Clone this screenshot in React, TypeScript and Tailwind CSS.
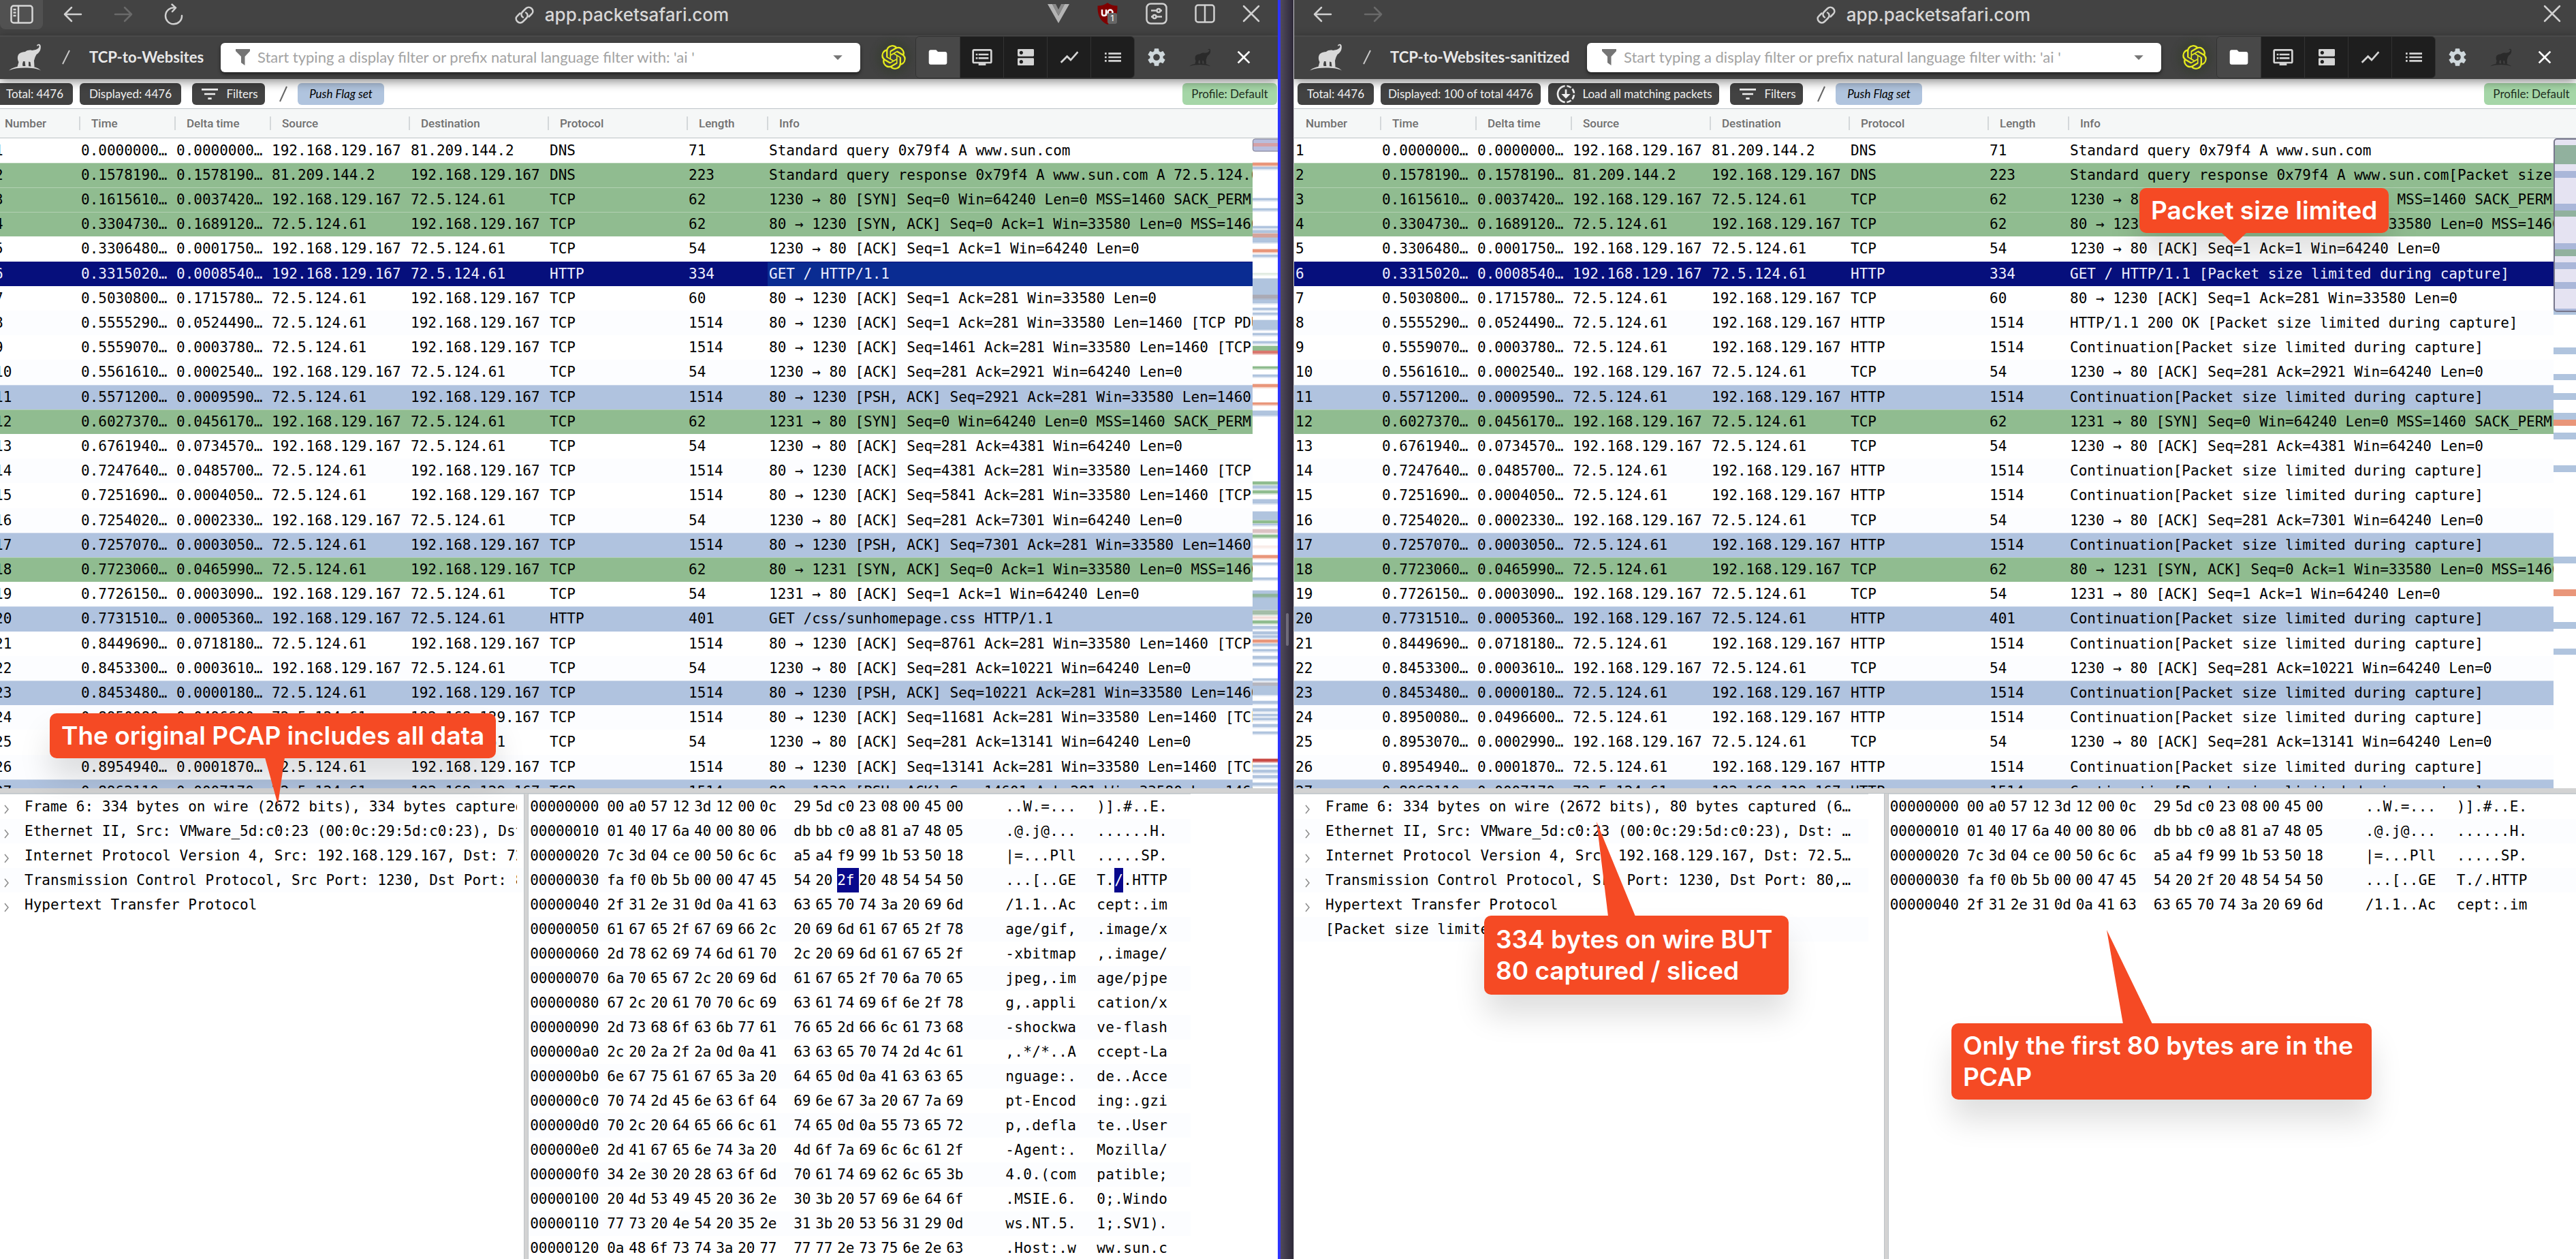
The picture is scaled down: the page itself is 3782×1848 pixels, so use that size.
import type { ReactNode } from "react";
import { clsx } from "clsx";
import {
    MdArrowDropDown,
    MdClose,
    MdDns,
    MdDownloading,
    MdDvr,
    MdFilterList,
    MdFolder,
    MdList,
    MdSettings,
    MdShowChart,
} from "react-icons/md";
import { SiOpenai } from "react-icons/si";

type TPacket = [time: string, delta: string, outgoing: boolean, protocol: string, length: number, info: string, color?: string];
type TStripe = [y: number, height: number, color: string];

const CLIENT = "192.168.129.167";
const LIMITED = "[Packet size limited during capture]";

const packets: TPacket[] = [
    ["0.000000000", "0.000000000", true, "DNS", 71, "Standard query 0x79f4 A www.sun.com"],
    ["0.157819000", "0.157819000", false, "DNS", 223, "Standard query response 0x79f4 A www.sun.com A 72.5.124.61", "green"],
    ["0.161561000", "0.003742000", true, "TCP", 62, "1230 → 80 [SYN] Seq=0 Win=64240 Len=0 MSS=1460 SACK_PERM", "green"],
    ["0.330473000", "0.168912000", false, "TCP", 62, "80 → 1230 [SYN, ACK] Seq=0 Ack=1 Win=33580 Len=0 MSS=1460", "green"],
    ["0.330648000", "0.000175000", true, "TCP", 54, "1230 → 80 [ACK] Seq=1 Ack=1 Win=64240 Len=0"],
    ["0.331502000", "0.000854000", true, "HTTP", 334, "GET / HTTP/1.1", "selected"],
    ["0.503080000", "0.171578000", false, "TCP", 60, "80 → 1230 [ACK] Seq=1 Ack=281 Win=33580 Len=0"],
    ["0.555529000", "0.052449000", false, "TCP", 1514, "80 → 1230 [ACK] Seq=1 Ack=281 Win=33580 Len=1460 [TCP PDU reassembled]"],
    ["0.555907000", "0.000378000", false, "TCP", 1514, "80 → 1230 [ACK] Seq=1461 Ack=281 Win=33580 Len=1460 [TCP PDU reassembled]"],
    ["0.556161000", "0.000254000", true, "TCP", 54, "1230 → 80 [ACK] Seq=281 Ack=2921 Win=64240 Len=0"],
    ["0.557120000", "0.000959000", false, "TCP", 1514, "80 → 1230 [PSH, ACK] Seq=2921 Ack=281 Win=33580 Len=1460", "blue"],
    ["0.602737000", "0.045617000", true, "TCP", 62, "1231 → 80 [SYN] Seq=0 Win=64240 Len=0 MSS=1460 SACK_PERM", "green"],
    ["0.676194000", "0.073457000", true, "TCP", 54, "1230 → 80 [ACK] Seq=281 Ack=4381 Win=64240 Len=0"],
    ["0.724764000", "0.048570000", false, "TCP", 1514, "80 → 1230 [ACK] Seq=4381 Ack=281 Win=33580 Len=1460 [TCP PDU reassembled]"],
    ["0.725169000", "0.000405000", false, "TCP", 1514, "80 → 1230 [ACK] Seq=5841 Ack=281 Win=33580 Len=1460 [TCP PDU reassembled]"],
    ["0.725402000", "0.000233000", true, "TCP", 54, "1230 → 80 [ACK] Seq=281 Ack=7301 Win=64240 Len=0"],
    ["0.725707000", "0.000305000", false, "TCP", 1514, "80 → 1230 [PSH, ACK] Seq=7301 Ack=281 Win=33580 Len=1460", "blue"],
    ["0.772306000", "0.046599000", false, "TCP", 62, "80 → 1231 [SYN, ACK] Seq=0 Ack=1 Win=33580 Len=0 MSS=1460", "green"],
    ["0.772615000", "0.000309000", true, "TCP", 54, "1231 → 80 [ACK] Seq=1 Ack=1 Win=64240 Len=0"],
    ["0.773151000", "0.000536000", true, "HTTP", 401, "GET /css/sunhomepage.css HTTP/1.1", "blue"],
    ["0.844969000", "0.071818000", false, "TCP", 1514, "80 → 1230 [ACK] Seq=8761 Ack=281 Win=33580 Len=1460 [TCP PDU reassembled]"],
    ["0.845330000", "0.000361000", true, "TCP", 54, "1230 → 80 [ACK] Seq=281 Ack=10221 Win=64240 Len=0"],
    ["0.845348000", "0.000018000", false, "TCP", 1514, "80 → 1230 [PSH, ACK] Seq=10221 Ack=281 Win=33580 Len=1460", "blue"],
    ["0.895008000", "0.049660000", false, "TCP", 1514, "80 → 1230 [ACK] Seq=11681 Ack=281 Win=33580 Len=1460 [TCP PDU reassembled]"],
    ["0.895307000", "0.000299000", true, "TCP", 54, "1230 → 80 [ACK] Seq=281 Ack=13141 Win=64240 Len=0"],
    ["0.895494000", "0.000187000", false, "TCP", 1514, "80 → 1230 [ACK] Seq=13141 Ack=281 Win=33580 Len=1460 [TCP PDU reassembled]"],
    ["0.896211000", "0.000717000", false, "TCP", 1514, "80 → 1230 [PSH, ACK] Seq=14601 Ack=281 Win=33580 Len=1460", "blue"],
];

// The sliced capture lost its payloads, so the dissector can no longer reassemble them
const slicedPackets = packets.map((packet, i): TPacket => {
    const [time, delta, outgoing, protocol, length, info, color] = packet;
    if (i === 1) return [time, delta, outgoing, protocol, length, "Standard query response 0x79f4 A www.sun.com" + LIMITED, color];
    if (i === 5) return [time, delta, outgoing, protocol, length, info + " " + LIMITED, color];
    if (i === 7) return [time, delta, outgoing, "HTTP", length, "HTTP/1.1 200 OK " + LIMITED, color];
    if (length > 300) return [time, delta, outgoing, "HTTP", length, "Continuation" + LIMITED, color];
    return packet;
});

const columns = ["Number", "Time", "Delta time", "Source", "Destination", "Protocol", "Length", "Info"];

const hexDump = [
    "00 a0 57 12 3d 12 00 0c 29 5d c0 23 08 00 45 00",
    "01 40 17 6a 40 00 80 06 db bb c0 a8 81 a7 48 05",
    "7c 3d 04 ce 00 50 6c 6c a5 a4 f9 99 1b 53 50 18",
    "fa f0 0b 5b 00 00 47 45 54 20 2f 20 48 54 54 50",
    "2f 31 2e 31 0d 0a 41 63 63 65 70 74 3a 20 69 6d",
    "61 67 65 2f 67 69 66 2c 20 69 6d 61 67 65 2f 78",
    "2d 78 62 69 74 6d 61 70 2c 20 69 6d 61 67 65 2f",
    "6a 70 65 67 2c 20 69 6d 61 67 65 2f 70 6a 70 65",
    "67 2c 20 61 70 70 6c 69 63 61 74 69 6f 6e 2f 78",
    "2d 73 68 6f 63 6b 77 61 76 65 2d 66 6c 61 73 68",
    "2c 20 2a 2f 2a 0d 0a 41 63 63 65 70 74 2d 4c 61",
    "6e 67 75 61 67 65 3a 20 64 65 0d 0a 41 63 63 65",
    "70 74 2d 45 6e 63 6f 64 69 6e 67 3a 20 67 7a 69",
    "70 2c 20 64 65 66 6c 61 74 65 0d 0a 55 73 65 72",
    "2d 41 67 65 6e 74 3a 20 4d 6f 7a 69 6c 6c 61 2f",
    "34 2e 30 20 28 63 6f 6d 70 61 74 69 62 6c 65 3b",
    "20 4d 53 49 45 20 36 2e 30 3b 20 57 69 6e 64 6f",
    "77 73 20 4e 54 20 35 2e 31 3b 20 53 56 31 29 0d",
    "0a 48 6f 73 74 3a 20 77 77 77 2e 73 75 6e 2e 63",
];

const B = "#b0c4de";
const G = "#8fbc8f";
const O = "#e9967a";

const fullMap: TStripe[] = [
    [36, 4, O], [42, 3, B], [88, 3, B], [103, 3, B], [129, 3, B], [135, 4, B], [140, 6, "#d5a39a"], [146, 7, B],
    [163, 4, O], [171, 3, B], [198, 2, "#dfeadf"], [206, 36, B], [230, 5, "#abaab4"], [249, 3, B], [256, 3, B],
    [267, 14, B], [286, 3, B], [298, 3, B], [305, 7, G], [312, 4, "#d9776e"], [335, 3, G], [347, 3, B],
    [361, 4, O], [388, 3, O], [400, 7, B], [504, 4, G], [510, 4, B], [517, 4, G], [530, 6, B], [548, 12, B],
    [561, 4, G], [566, 2, B], [574, 5, "#dcc3c4"], [582, 4, G], [598, 3, "#f9ece8"], [612, 4, O], [623, 3, B],
    [645, 3, B], [664, 14, B], [669, 4, "#8fb49a"], [678, 14, B], [693, 6, "#a4bda8"], [702, 3, "#f1dcd8"],
    [708, 4, G], [716, 4, B], [724, 4, B], [730, 3, B], [736, 4, O], [742, 3, B], [750, 3, B], [760, 4, B],
    [770, 4, B], [793, 3, B], [799, 5, "#b5b5be"], [804, 13, B], [826, 4, B], [837, 4, B], [845, 3, B],
    [851, 3, B], [860, 4, B], [871, 3, B], [911, 4, "#c94a45"], [920, 3, B], [927, 4, B], [935, 4, B], [946, 4, B],
];

const slicedMap: TStripe[] = [
    [10, 28, G], [48, 10, B], [96, 10, B], [106, 9, G], [154, 9, B], [163, 10, G], [182, 10, B], [211, 10, B],
    [250, 9, B], [307, 10, B], [346, 9, B], [374, 10, B], [403, 10, B], [413, 9, O], [432, 10, B], [480, 10, B],
    [614, 10, B], [662, 10, O], [710, 10, B], [749, 9, B],
];

const Elephant = ({ color }: { color: string }) => (
    <svg width="48" height="40" viewBox="0 0 48 40" fill={color} aria-hidden="true">
        <path d="M41 3.500C41 1.500 43 .500 44.500.800 47 1.500 47.200 4.500 46.500 8c-.7 3.500-3 6-6 8l-2 4-1.500 5 .5 9h-5l-1-7-2.500-.5V34h-4.500l-1-8H21l-1 4 .5 4h-8l2-7C12.500 24 12 18 15 15c3-2.500 6-2.500 9-3 3-2.500 7-3 10-2 4-.5 7-1 9.500-3.500 1.500-1.500 1.300-4 0-4-1 0-1 1.500-2.500 1z" />
        <path d="M0 39.500c5-4.600 13-6.500 24-6.500 11.500 0 18.500 2 23 6.500-7-3-14-3.900-23-3.900S7 36.500 0 39.500z" />
    </svg>
);

const Arrow = ({ back, className }: { back?: boolean; className: string }) => (
    <svg width="28" height="24" viewBox="0 0 28 24" fill="none" strokeWidth="2.500" strokeLinecap="round" strokeLinejoin="round" className={className} aria-hidden="true">
        <path d={back ? "M26 12H2M12 2L2 12l10 10" : "M2 12h24M16 2l10 10-10 10"} />
    </svg>
);

const CloseIcon = () => (
    <svg width="26" height="26" viewBox="0 0 26 26" stroke="#d0d0d0" strokeWidth="2.500" strokeLinecap="round" aria-hidden="true">
        <path d="M2 2l22 22M24 2L2 24" />
    </svg>
);

function BrowserBar({ primary }: { primary?: boolean }) {
    return (
        <div className={clsx("grid h-[52px] shrink-0 grid-cols-[1fr_auto_1fr] items-start bg-[#434343]", primary ? "pr-[26px]" : "pr-[22px]")}>
            <div className={clsx("flex h-[41px] items-center gap-[46px]", !primary && "pl-7")}>
                {primary && (
                    <button aria-label="Panel" className="-mr-4 flex h-11 w-[63px] shrink-0 items-center justify-center rounded-b-lg bg-[#515151]">
                        <svg width="34" height="28" viewBox="0 0 34 28" fill="none" stroke="#d6d6d6" strokeWidth="2.500">
                            <rect x="1.500" y="1.500" width="31" height="25" rx="3.500" />
                            <path d="M12 1.500v25M4.500 7h4M4.500 11.500h4M4.500 16h4" />
                        </svg>
                    </button>
                )}
                <button aria-label="Back"><Arrow back className="stroke-[#d0d0d0]" /></button>
                <button aria-label="Forward"><Arrow className="stroke-[#6a6a6a]" /></button>
                {primary && (
                    <button aria-label="Reload">
                        <svg width="28" height="32" viewBox="0 0 28 32" fill="none" stroke="#d0d0d0" strokeWidth="2.500" strokeLinecap="round" strokeLinejoin="round">
                            <path d="M16 6.500A12 12 0 1 0 26 18M11.500 1.500l5.500 5-5 5.500" />
                        </svg>
                    </button>
                )}
            </div>
            <div className={clsx("flex h-[43px] items-center gap-4 font-['Inter',sans-serif] text-[26px] font-medium text-[#d6d6d6]", primary ? "pr-6" : "pr-3")}>
                <svg width="28" height="28" viewBox="0 0 28 28" fill="none" stroke="#d0d0d0" strokeWidth="2.500" strokeLinecap="round" aria-hidden="true">
                    <path d="M12 17.500c-3-1.500-3.500-5.500-1-8l5-5c2.500-2.500 6-2.500 8.500 0s2.500 6 0 8l-4 4" />
                    <path d="M16 10.500c3 1.500 3.500 5.500 1 8l-5 5c-2.500 2.500-6 2.500-8.500 0s-2.500-6 0-8l4-4" />
                </svg>
                <span>app.packetsafari.com</span>
            </div>
            <div className="flex h-10 items-center justify-end gap-10">
                {primary && (
                    <>
                        <button aria-label="Vue devtools">
                            <svg width="32" height="28" viewBox="0 0 32 28">
                                <path d="M0 0h7l9 17 9-17h7L16 28z" fill="#b4b4b4" />
                                <path d="M7 0h5l4 8 4-8h5l-9 17z" fill="#8a8a8a" />
                            </svg>
                        </button>
                        <button aria-label="Content blocker">
                            <svg width="32" height="32" viewBox="0 0 32 32">
                                <path d="M16 0c4 3 9 4.500 14.500 4.500C31 18 27 27 16 32 5 27 1 18 1.500 4.500 7 4.500 12 3 16 0z" fill="#800000" />
                                <path d="M8 10v6c0 4 6 4 6 0v-6M14 16v3" fill="none" stroke="#fff" strokeWidth="2.500" />
                                <circle cx="20" cy="14" r="3.500" fill="none" stroke="#fff" strokeWidth="2.500" />
                                <rect x="16" y="15" width="14" height="16" rx="3" fill="#666" />
                                <text x="23" y="27" textAnchor="middle" fontSize="12" fontFamily="Inter" fill="#fff">1</text>
                            </svg>
                        </button>
                        <button aria-label="Site settings">
                            <svg width="32" height="32" viewBox="0 0 32 32" fill="none" stroke="#d0d0d0" strokeWidth="2.500">
                                <rect x="1.500" y="1.500" width="29" height="29" rx="6" />
                                <path d="M8 11.500h8M22 11.500h2M8 20.500h2M16 20.500h8" />
                                <circle cx="19" cy="11.500" r="2.500" />
                                <circle cx="13" cy="20.500" r="2.500" />
                            </svg>
                        </button>
                        <button aria-label="Split view">
                            <svg width="30" height="28" viewBox="0 0 30 28" fill="none" stroke="#d0d0d0" strokeWidth="2.500">
                                <rect x="1.500" y="1.500" width="27" height="25" rx="3.500" />
                                <path d="M15 1.500v25" />
                            </svg>
                        </button>
                    </>
                )}
                <button aria-label="Close tab"><CloseIcon /></button>
            </div>
        </div>
    );
}

function AppBar({ title, primary }: { title: string; primary?: boolean }) {
    const views = [MdFolder, MdDvr, MdDns, MdShowChart, MdList];
    const names = ["Files", "Packets", "Servers", "Charts", "List"];

    return (
        <header className={clsx("relative z-10 flex h-16 shrink-0 items-center border-t-2 border-[#4a4a4a] bg-[#424242] pb-[2px] shadow-[0_4px_14px_rgba(0,0,0,0.45)]", primary ? "pr-[18px] pl-[13px]" : "pr-[14px] pl-[23px]")}>
            <a href="#home" aria-label="Home"><Elephant color="#d9d9d9" /></a>
            <svg width="12" height="22" viewBox="0 0 12 22" stroke="#c8c8c8" strokeWidth="2" className="ml-[30px]" aria-hidden="true">
                <path d="M1 21L11 1" />
            </svg>
            <h1 className={clsx("ml-7 shrink-0 font-['Lato',sans-serif] text-[22px] font-bold text-[#e8e8e8]", primary ? "w-[193px]" : "w-[289px]")}>{title}</h1>
            <label className="flex h-[43px] min-w-0 flex-1 items-center rounded-md bg-white pr-[17px] pl-[22px] shadow-[0_3px_5px_rgba(0,0,0,0.5)]">
                <svg width="21" height="24" viewBox="0 0 21 24" fill="#757575" aria-hidden="true">
                    <path d="M0 0h21v3l-7.500 8v13L8 20v-9L0 3z" />
                </svg>
                <input
                    type="text"
                    aria-label="Display filter"
                    placeholder="Start typing a display filter or prefix natural language filter with: 'ai '"
                    className="ml-[11px] min-w-0 flex-1 font-['Lato',sans-serif] text-[22px] outline-none placeholder:text-[#a3a3a3]"
                />
                <MdArrowDropDown size={32} color="#757575" aria-hidden="true" />
            </label>
            <button aria-label="Assistant" className="ml-[17px] flex h-[62px] w-16 items-center justify-center">
                <SiOpenai size={36} color="#e6ec1c" className="rounded-full shadow-[0_0_10px_8px_rgba(50,60,45,0.45)]" />
            </button>
            <nav className="flex h-[62px] overflow-hidden rounded-md border border-[#333]">
                {views.map((Icon, i) => (
                    <button key={names[i]} aria-label={names[i]} className={clsx("flex w-16 items-center justify-center", i === 0 ? "bg-[#484848] text-white" : "border-l border-[#333] bg-[#1e1e1e] text-[#d4d4d4]")}>
                        <Icon size={32} />
                    </button>
                ))}
            </nav>
            <button aria-label="Settings" className="flex w-16 justify-center text-[#cfd8dc]"><MdSettings size={32} /></button>
            <button aria-label="Safari" className="flex w-16 justify-center">
                <svg width="32" height="27" viewBox="0 0 48 40" aria-hidden="true"><Elephant color="#2a2a2a" /></svg>
            </button>
            <button aria-label="Close" className="flex w-16 justify-center text-white"><MdClose size={32} /></button>
        </header>
    );
}

function Chip({ className, children }: { className: string; children: ReactNode }) {
    return <button className={clsx("flex h-8 shrink-0 items-center justify-center gap-2 rounded-md whitespace-nowrap", className)}>{children}</button>;
}

function ChipBar({ primary }: { primary?: boolean }) {
    return (
        <div className={clsx("flex h-[43px] shrink-0 items-center overflow-hidden bg-white font-['Lato',sans-serif] text-[17px] text-[#f0f0f0]", primary && "pr-px")}>
            <Chip className={clsx("w-28 bg-[#424242]", primary ? "-ml-[5px]" : "ml-[5px]")}>Total: 4476</Chip>
            <Chip className={clsx("ml-[10px] bg-[#424242]", primary ? "w-[149px]" : "w-[235px]")}>{primary ? "Displayed: 4476" : "Displayed: 100 of total 4476"}</Chip>
            {!primary && (
                <Chip className="ml-[11px] w-[251px] bg-[#424242]"><MdDownloading size={32} />Load all matching packets</Chip>
            )}
            <Chip className="ml-4 w-[107px] bg-[#424242]"><MdFilterList size={32} />Filters</Chip>
            <svg width="12" height="24" viewBox="0 0 12 24" stroke="#666" strokeWidth="2" className="mr-[15px] ml-[21px]" aria-hidden="true">
                <path d="M1 23L11 1" />
            </svg>
            <Chip className="w-[127px] bg-[#b0c4de] text-black italic">Push Flag set</Chip>
            <Chip className={clsx("ml-auto w-[139px] bg-[#a5d6a7] text-[#1f2f1f]", !primary && "-mr-[4px]")}>Profile: Default</Chip>
        </div>
    );
}

const Columns = () => (
    <colgroup>
        <col className="w-[127px]" />
        <col className="w-[140px]" />
        <col className="w-[140px]" />
        <col className="w-[204px]" />
        <col className="w-[204px]" />
        <col className="w-[204px]" />
        <col className="w-[118px]" />
        <col />
    </colgroup>
);

function PacketList({ rows, primary }: { rows: TPacket[]; primary?: boolean }) {
    return (
        <>
            <div className="shrink-0 overflow-hidden border-y border-[#bdc3c7] bg-[#f5f7f7]">
                <div className={clsx("flex h-[42px] items-center font-['Roboto',sans-serif] text-[17px] font-medium text-[#707070]", primary && "-ml-[10px]")}>
                    {columns.map((name, i) => (
                        <div
                            key={name}
                            className={clsx(
                                "flex h-5 shrink-0 items-center",
                                i === 0 ? "w-[126px] pl-[17px]" : "border-l-2 border-[#d4d8da] pl-4",
                                (i === 1 || i === 2) && "w-[140px]",
                                i > 2 && i < 6 && "w-[204px]",
                                i === 6 && "w-[118px]",
                            )}
                        >
                            {name}
                        </div>
                    ))}
                </div>
            </div>
            <div className="flex min-h-0 flex-[954] overflow-hidden">
                <div className="min-w-0 flex-1 overflow-hidden">
                    <div className={clsx(primary && "-ml-[10px]")}>
                        <table className="w-full table-fixed border-separate border-spacing-0 text-left">
                            <Columns />
                            <tbody>
                                {rows.map(([time, delta, outgoing, protocol, length, info, color], i) => {
                                    const server = i < 2 ? "81.209.144.2" : "72.5.124.61";
                                    return (
                                        <tr
                                            key={i}
                                            className={clsx(
                                                "h-9 nth-[5n]:h-[37px] [&>td]:overflow-hidden [&>td]:border-t [&>td]:p-0 [&>td]:pb-[2px] [&>td]:pl-[2px] [&>td]:whitespace-nowrap",
                                                !color && "[&>td]:border-transparent even:bg-[#fcfdff]",
                                                color === "green" && "bg-[#90bc90] [&>td]:border-white/30",
                                                color === "blue" && "bg-[#b0c3df] [&>td]:border-white/30",
                                                color === "selected" && "bg-[#060f7c] text-[#eef] [&>td]:border-[#060f7c]",
                                            )}
                                        >
                                            <td>{i + 1}</td>
                                            <td className="text-ellipsis">{time}</td>
                                            <td className="text-ellipsis">{delta}</td>
                                            <td>{outgoing ? CLIENT : server}</td>
                                            <td>{outgoing ? server : CLIENT}</td>
                                            <td>{protocol}</td>
                                            <td>{length}</td>
                                            <td className={clsx(primary && color === "selected" && "bg-[#0a2c92]")}>{info}</td>
                                        </tr>
                                    );
                                })}
                            </tbody>
                        </table>
                    </div>
                </div>
                <MiniMap primary={primary} />
            </div>
        </>
    );
}

function MiniMap({ primary }: { primary?: boolean }) {
    const stripes = primary ? fullMap : slicedMap;
    const width = primary ? 37 : 33;
    return (
        <svg width={width} height="954" viewBox={`0 0 ${width} 954`} className="shrink-0 bg-white" aria-hidden="true">
            {stripes.map(([y, height, color]) => (
                <g key={y} fill={color}>
                    {primary && <rect y={y - 1} width={width} height={height + 3} opacity="0.400" />}
                    <rect y={y} width={width} height={height} />
                </g>
            ))}
            {primary ? (
                <g>
                    <rect x="0.500" y="1" width="44" height="18" rx="3" fill="#b9bedd" stroke="#77778c" />
                    <rect x="1" y="7" width="36" height="5" fill="#d5a0a6" />
                </g>
            ) : (
                <rect x="1" y="1" width="44" height="253" rx="4" fill="#9790cc" fillOpacity="0.250" stroke="#77778c" strokeWidth="2" />
            )}
        </svg>
    );
}

function ProtocolTree({ primary }: { primary?: boolean }) {
    const items = primary
        ? [
            "Frame 6: 334 bytes on wire (2672 bits), 334 bytes captured (2672 bits)",
            "Ethernet II, Src: VMware_5d:c0:23 (00:0c:29:5d:c0:23), Dst: bb:c0:a8",
            "Internet Protocol Version 4, Src: 192.168.129.167, Dst: 72.5.124.61",
            "Transmission Control Protocol, Src Port: 1230, Dst Port: 80, Seq: 1",
            "Hypertext Transfer Protocol",
        ]
        : [
            "Frame 6: 334 bytes on wire (2672 bits), 80 bytes captured (640 bits)",
            "Ethernet II, Src: VMware_5d:c0:23 (00:0c:29:5d:c0:23), Dst: bb:c0:a8",
            "Internet Protocol Version 4, Src: 192.168.129.167, Dst: 72.5.124.61",
            "Transmission Control Protocol, Src Port: 1230, Dst Port: 80, Seq: 1",
            "Hypertext Transfer Protocol",
            LIMITED,
        ];

    return (
        <ul className={clsx("overflow-hidden border-t border-[#d4d8da]", primary ? "-ml-[10px]" : "mr-[23px]")}>
            {items.map((item, i) => (
                <li key={item} className={clsx("flex h-9 items-center even:bg-[#fcfdff]", primary ? "pr-[10px]" : "pr-5")}>
                    <svg width="8" height="14" viewBox="0 0 8 14" fill="none" stroke={i < 5 ? "#8a8a8a" : "none"} strokeWidth="1.500" className="mt-2 mr-[22px] ml-4 shrink-0" aria-hidden="true">
                        <path d="M1 1l5 6-5 6" />
                    </svg>
                    <span className={clsx("min-w-0 overflow-hidden whitespace-nowrap", !primary && "text-ellipsis")}>{item}</span>
                </li>
            ))}
        </ul>
    );
}

const toAscii = (byte: string) => {
    const code = parseInt(byte, 16);
    return code > 32 && code < 127 ? String.fromCharCode(code) : ".";
};

function HexView({ primary }: { primary?: boolean }) {
    const lines = primary ? hexDump : hexDump.slice(0, 5);
    const isSelected = (row: number, col: number) => primary && row === 3 && col === 10;

    return (
        <table className={clsx("border-t border-[#d4d8da]", !primary && "w-full")}>
            <tbody>
                {lines.map((line, row) => {
                    const bytes = line.split(" ");
                    return (
                        <tr key={row} className="h-9 even:bg-[#fcfdff] [&>td]:p-0">
                            <td className="w-[115px] pl-[2px]!">{(row * 16).toString(16).padStart(8, "0")}</td>
                            {[0, 8].map((start) => (
                                <td key={start} className={start ? "w-[311px]" : "w-[274px]"}>
                                    <div className="flex">
                                        {bytes.slice(start, start + 8).map((byte, i) => (
                                            <span key={i} className={clsx("w-8 leading-9", isSelected(row, start + i) && "bg-[#08088c] text-white")}>{byte}</span>
                                        ))}
                                    </div>
                                </td>
                            ))}
                            {[0, 8].map((start) => (
                                <td key={start} className={start ? (primary ? "w-[138px]" : "") : "w-[134px]"}>
                                    <div className="flex">
                                        {bytes.slice(start, start + 8).map((byte, i) => (
                                            <span key={i} className={clsx("w-[13px] leading-9", isSelected(row, start + i) && "bg-[#08088c] text-white")}>{toAscii(byte)}</span>
                                        ))}
                                    </div>
                                </td>
                            ))}
                        </tr>
                    );
                })}
            </tbody>
        </table>
    );
}

function Panel({ title, rows, primary }: { title: string; rows: TPacket[]; primary?: boolean }) {
    return (
        <section className={clsx("flex min-w-0 flex-col overflow-hidden bg-white", primary ? "flex-[1876] border-r-4 border-[#2f35ff]" : "flex-[1882]")}>
            <BrowserBar primary={primary} />
            <AppBar title={title} primary={primary} />
            <ChipBar primary={primary} />
            <PacketList rows={rows} primary={primary} />
            <div className="h-2 shrink-0 border-b border-[#bdc3c7] bg-[#d3d3d3]" />
            <div className="flex min-h-0 flex-[683] overflow-hidden">
                <div className={clsx("shrink-0 overflow-hidden", primary ? "w-[41%]" : "w-[46%]")}>
                    <ProtocolTree primary={primary} />
                </div>
                <div className="w-[7px] shrink-0 border-x border-[#bdc3c7] bg-[#d3d3d3]" />
                <div className="min-w-0 flex-1 overflow-hidden">
                    <HexView primary={primary} />
                </div>
            </div>
        </section>
    );
}

// points draw the tail in the coordinates of the bubble's own box
function Callout({ className, points, children }: { className: string; points: string; children: ReactNode }) {
    return (
        <div className={clsx("absolute z-20 rounded-[10px] bg-[#f54a24] px-[17px] font-['Inter',sans-serif] text-[37px] leading-[46px] font-semibold text-white shadow-[0_30px_45px_rgba(0,0,0,0.13)]", className)}>
            <svg width="1" height="1" className="absolute top-0 left-0 overflow-visible" fill="#f54a24" aria-hidden="true">
                <polygon points={points} />
            </svg>
            {children}
        </div>
    );
}

export default function App() {
    return (
        <main className="relative flex h-screen w-full overflow-hidden bg-white font-['DejaVu_Sans_Mono',monospace] text-[21px] leading-[32px] text-black">
            <Panel title="TCP-to-Websites" rows={packets} primary />
            <div className="flex w-5 shrink-0 items-center justify-center border-r border-[#c8c8cc] bg-linear-to-r from-[#504a5c] to-[#2d2838]">
                <div className="h-12 w-1 rounded-full bg-[#6f6b7a]" />
            </div>
            <Panel title="TCP-to-Websites-sanitized" rows={slicedPackets} />

            <Callout className="top-[1047px] left-[73px] w-[655px] py-[10px] whitespace-nowrap" points="316,65 345,65 335,134">The original PCAP includes all data</Callout>
            <Callout className="top-[276px] left-[3141px] w-[366px] py-[10px] whitespace-nowrap" points="120,65 158,65 139,83">Packet size limited</Callout>
            <Callout className="top-[1344px] left-[2179px] w-[447px] py-3 whitespace-nowrap" points="182,1 222,1 165,-138">334 bytes on wire BUT<br />80 captured / sliced</Callout>
            <Callout className="top-[1502px] left-[2865px] w-[617px] py-[10px] whitespace-nowrap" points="252,1 295,1 228,-137">Only the first 80 bytes are in the<br />PCAP</Callout>
        </main>
    );
}
